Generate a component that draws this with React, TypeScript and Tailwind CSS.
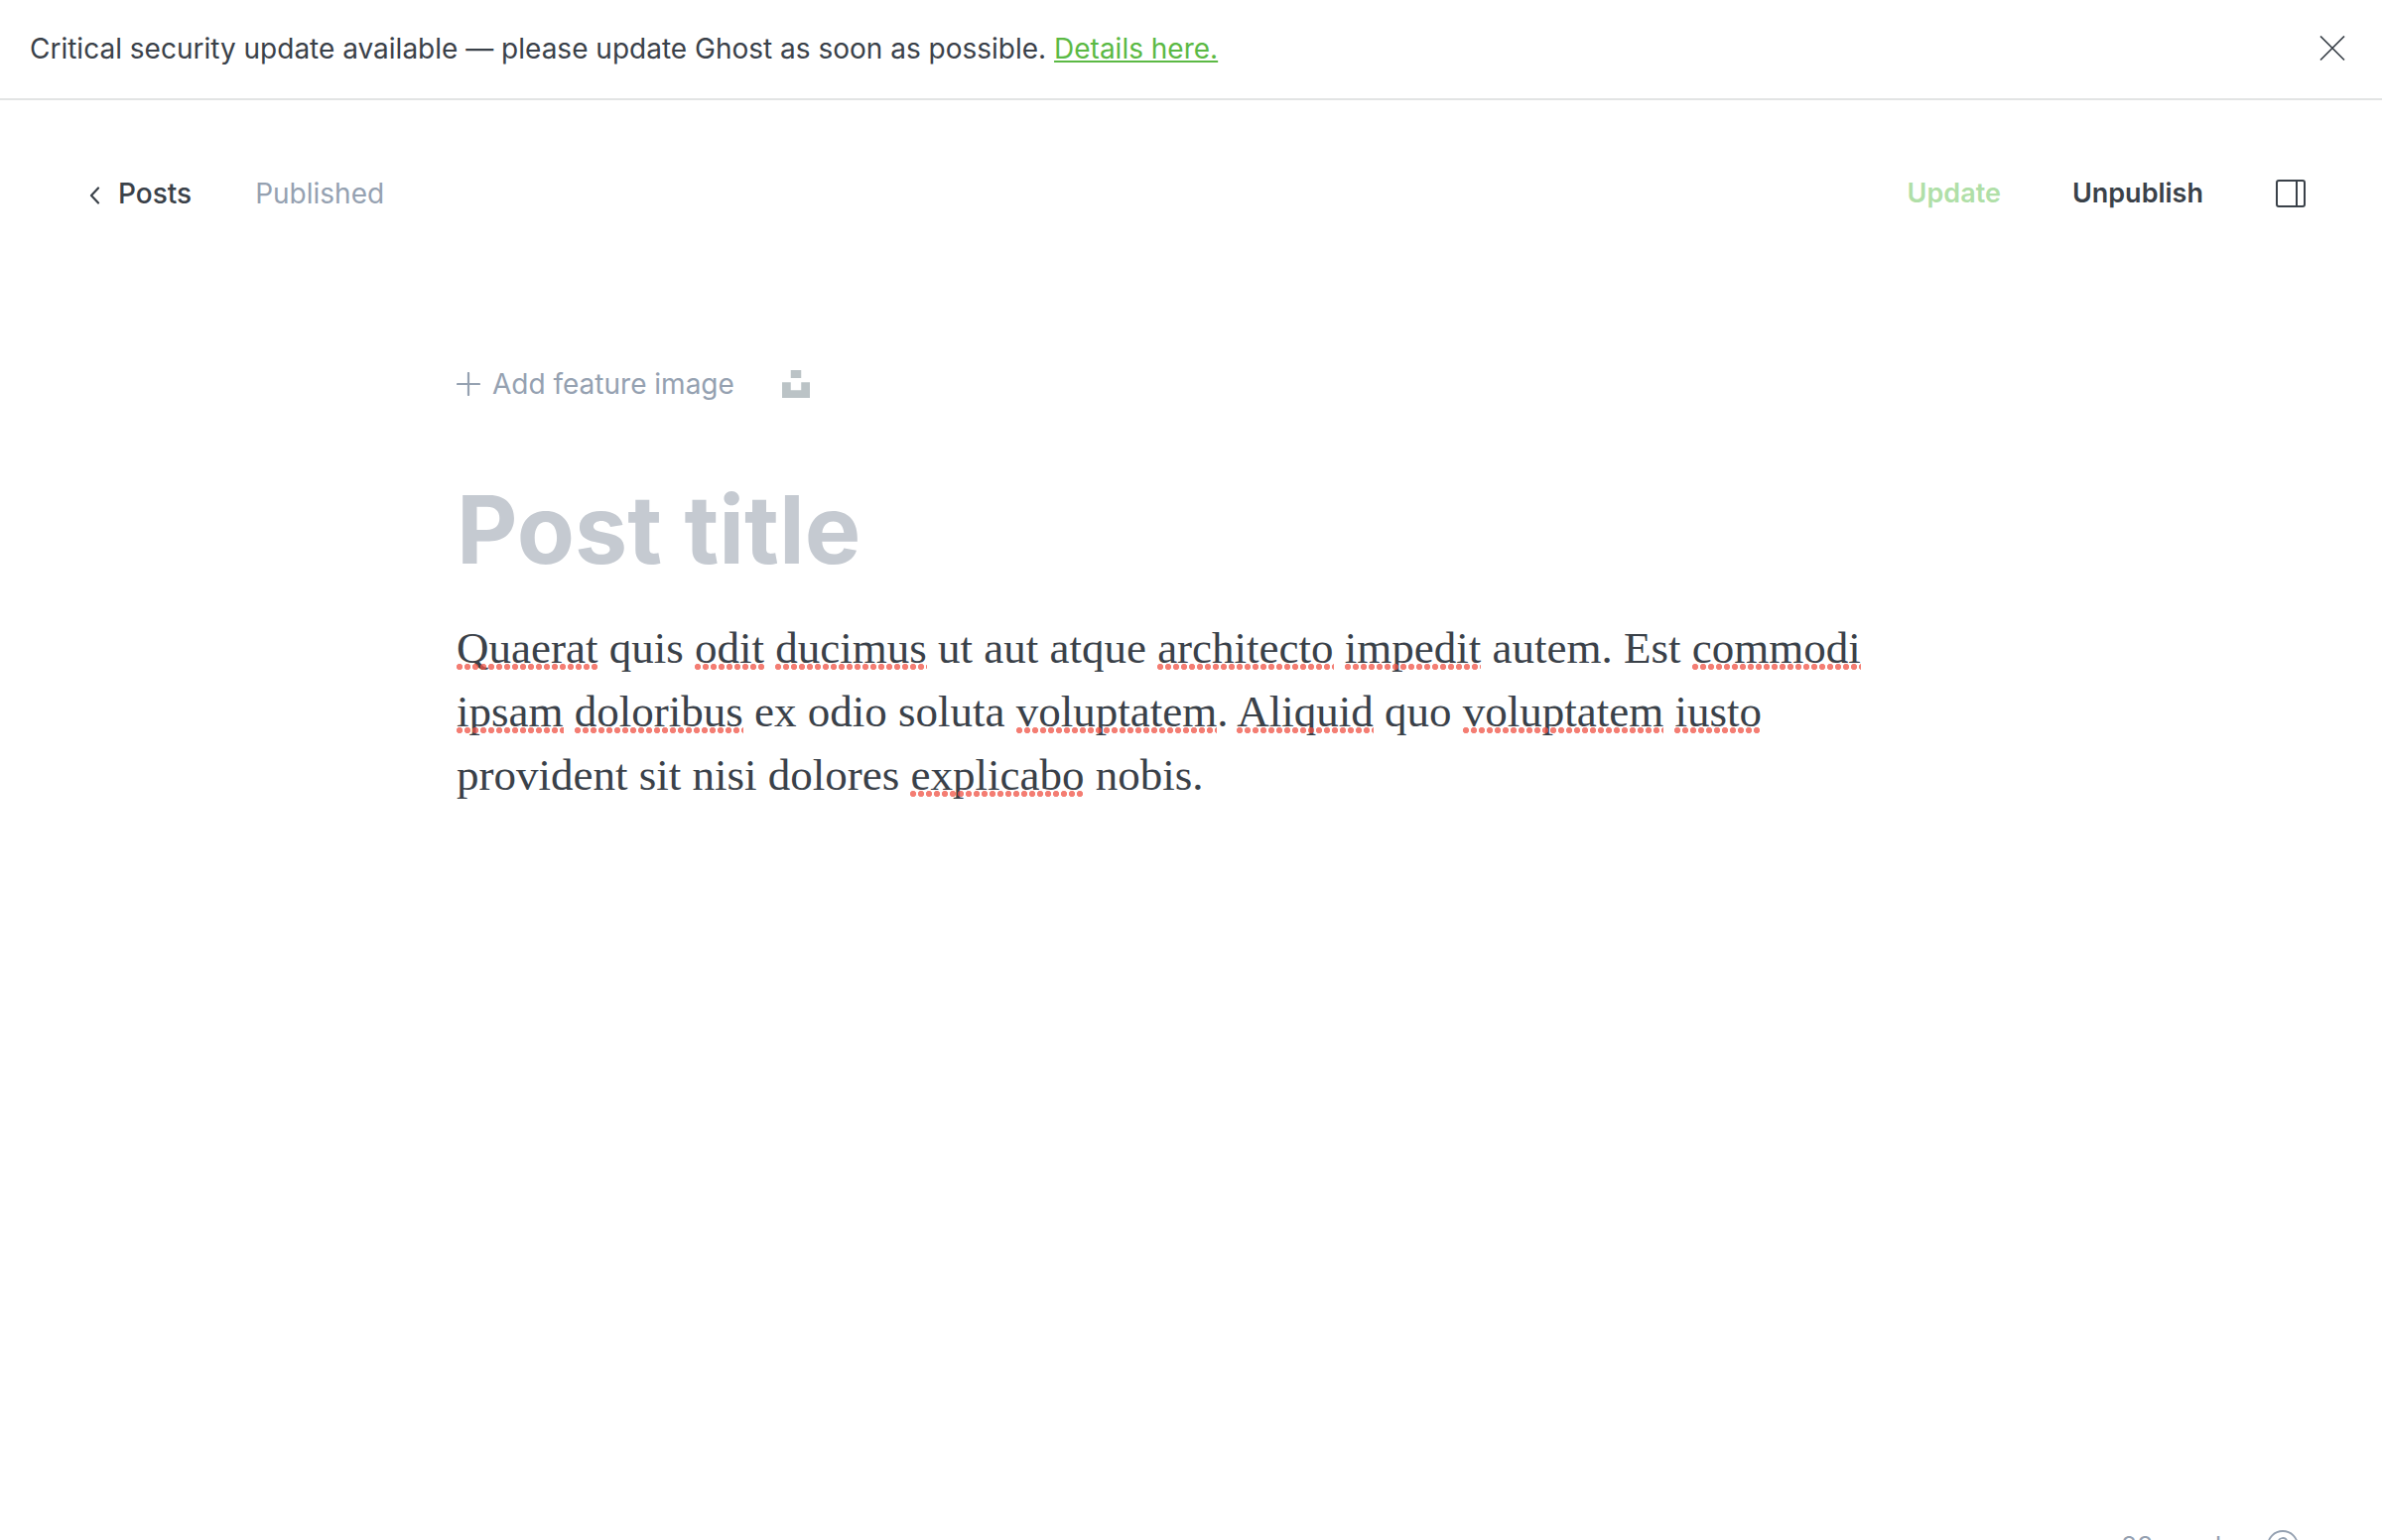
import type { ReactNode } from "react";

function Misspelled({ children }: { children: ReactNode }) {
  return (
    <span className="relative after:pointer-events-none after:absolute after:inset-x-0 after:bottom-[3px] after:h-[6px] after:bg-[radial-gradient(circle_at_3px_3px,rgba(240,82,68,0.75)_2.8px,transparent_3.4px)] after:bg-[length:8px_6px] after:bg-repeat-x after:content-['']">
      {children}
    </span>
  );
}

function Banner() {
  return (
    <aside className="flex shrink-0 items-center justify-between border-b-2 border-[#e2e4e4] px-[30px] pt-7 pb-[29px]">
      <p className="text-[28px] leading-[42px]">
        Critical security update available — please update Ghost as soon as possible.{" "}
        <a href="#details" className="text-[#5bb944] underline decoration-2 underline-offset-2 [text-decoration-skip-ink:none]">
          Details here.
        </a>
      </p>
      <button type="button" aria-label="Close" className="-mr-px p-2">
        <svg viewBox="0 0 26 26" className="size-[26px]" fill="none" stroke="currentColor" strokeWidth="1.7">
          <path d="M1 0.500 25 24.500M25 0.500 1 24.500" />
        </svg>
      </button>
    </aside>
  );
}

function Toolbar() {
  return (
    <header className="flex items-center justify-between pt-[73px] pr-[76px] pl-[90px] text-[28px] leading-[42px]">
      <div className="flex items-center gap-16">
        <a href="#posts" className="flex items-center gap-[18px] font-medium">
          <svg viewBox="0 0 11 18" className="mt-1 h-[18px] w-[11px]" fill="none" stroke="currentColor" strokeWidth="2.2" strokeLinecap="round" strokeLinejoin="round">
            <path d="M9 1.5 2 9l7 7.5" />
          </svg>
          Posts
        </a>
        <span className="text-[#95a1b1]">Published</span>
      </div>
      <div className="flex items-center gap-[72px] text-[27px] font-semibold">
        <button type="button" className="text-[#b0dfa8]">Update</button>
        <button type="button">Unpublish</button>
        <button type="button" aria-label="Settings">
          <svg viewBox="0 0 32 28" className="h-7 w-8" fill="none" stroke="currentColor" strokeWidth="2">
            <rect x="2" y="1" width="28" height="26" rx="2" />
            <path d="M22 1v26" />
          </svg>
        </button>
      </div>
    </header>
  );
}

function Editor() {
  return (
    <main className="mx-auto w-full max-w-[1480px] pt-[150px]">
      <div className="flex items-center gap-12 text-[#95a1b1]">
        <button type="button" className="flex items-center gap-3 text-[28px] leading-[42px]">
          <svg viewBox="0 0 24 24" className="size-6" fill="none" stroke="currentColor" strokeWidth="2.2" strokeLinecap="round">
            <path d="M12 1v22M1 12h22" />
          </svg>
          Add feature image
        </button>
        <button type="button" aria-label="Search Unsplash" className="text-[#bbc3c6]">
          <svg viewBox="0 0 28 28" className="size-7" fill="currentColor">
            <path d="M8.75 0h10.5v7.9H8.75zM19.25 12.25H28V28H0V12.25h8.75v7.9h10.5z" />
          </svg>
        </button>
      </div>
      <input
        type="text"
        aria-label="Post title"
        placeholder="Post title"
        className="mt-[66px] block h-[120px] w-full text-[95px] font-bold outline-none placeholder:text-[#c5cad1] placeholder:opacity-100"
      />
      <p className="mt-[27px] font-['Liberation_Serif',serif] text-[45px] leading-[64px]">
        <Misspelled>Quaerat</Misspelled> quis <Misspelled>odit</Misspelled> <Misspelled>ducimus</Misspelled> ut aut atque{" "}
        <Misspelled>architecto</Misspelled> <Misspelled>impedit</Misspelled> autem. Est <Misspelled>commodi</Misspelled>{" "}
        <Misspelled>ipsam</Misspelled> <Misspelled>doloribus</Misspelled> ex odio soluta <Misspelled>voluptatem</Misspelled>.{" "}
        <Misspelled>Aliquid</Misspelled> quo <Misspelled>voluptatem</Misspelled> <Misspelled>iusto</Misspelled> provident sit nisi
        dolores <Misspelled>explicabo</Misspelled> nobis.
      </p>
    </main>
  );
}

function Footer() {
  return (
    <footer className="mt-auto flex items-center justify-end gap-8 pr-[84px] pb-[79px] text-[26px] leading-8 text-[#95a1b1]">
      <span>28 words</span>
      <a href="#help" aria-label="Help">
        <svg viewBox="0 0 32 32" className="size-8" fill="none" stroke="currentColor" strokeWidth="1.8" strokeLinecap="round">
          <circle cx="16" cy="16" r="15" />
          <path d="M11.500 12.500a4.500 4.500 0 1 1 6.200 4.200c-1.100.4-1.700 1.200-1.700 2.300v1" />
          <circle cx="16" cy="24" r="0.6" />
        </svg>
      </a>
    </footer>
  );
}

export default function App() {
  return (
    <div className="flex h-screen flex-col overflow-hidden bg-white font-['Inter',sans-serif] text-[#3a4149]">
      <Banner />
      <div className="flex h-screen shrink-0 flex-col">
        <Toolbar />
        <Editor />
        <Footer />
      </div>
    </div>
  );
}
